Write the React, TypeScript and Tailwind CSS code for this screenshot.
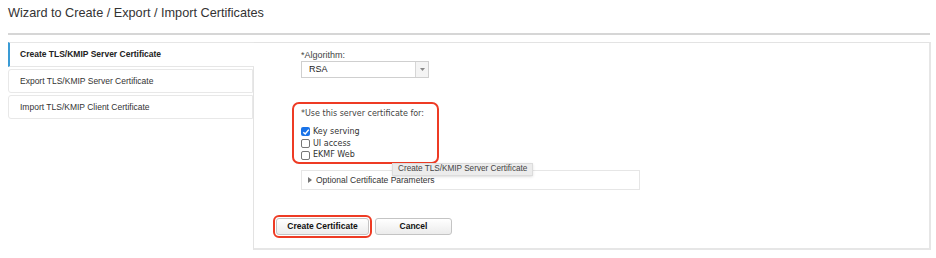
import React from "react";

const tabs = [
  "Create TLS/KMIP Server Certificate",
  "Export TLS/KMIP Server Certificate",
  "Import TLS/KMIP Client Certificate",
];

const uses = [
  { label: "Key serving", checked: true },
  { label: "UI access", checked: false },
  { label: "EKMF Web", checked: false },
];

const Checkbox: React.FC<{ checked: boolean }> = ({ checked }) =>
  checked ? (
    <span className="w-[9px] h-[9px] rounded-[2px] bg-[#1a73e8] flex items-center justify-center">
      <svg width="8" height="8" viewBox="0 0 8 8">
        <path d="M1.3 4.2 L3.2 6 L6.8 1.6" fill="none" stroke="white" strokeWidth="1.5" />
      </svg>
    </span>
  ) : (
    <span className="w-[9px] h-[9px] rounded-[2px] border border-[#777] bg-white" />
  );

export default function App() {
  return (
    <div className="w-[936px] h-[258px] bg-white relative font-['Liberation_Sans',Arial,sans-serif] text-[#222] overflow-hidden">
      {/* Title */}
      <div className="pl-[8px] pt-[5px] h-[33px] text-[12.7px] leading-[16px] text-[#333]">
        Wizard to Create / Export / Import Certificates
      </div>
      <div className="mx-[8px] mr-[6px] h-[2px] bg-[#d6d6d6]" />

      <div className="flex pl-[8px] pt-[7px]">
        {/* Tabs */}
        <div className="w-[245px] flex flex-col gap-[2px]">
          {tabs.map((t, i) =>
            i === 0 ? (
              <div
                key={t}
                className="h-[25px] flex items-center pl-[10px] border-l-2 border-[#3a9bd5] border-t border-b border-t-[#e6e6e6] border-b-[#e6e6e6] bg-white text-[8.5px] font-bold text-[#222] relative z-10 mr-[-1px]"
              >
                {t}
              </div>
            ) : (
              <div
                key={t}
                className="h-[24px] flex items-center pl-[11px] border border-[#e8e8e8] rounded-l-[3px] text-[8.5px] text-[#333]"
              >
                {t}
              </div>
            )
          )}
        </div>

        {/* Panel */}
        <div className="w-[678px] h-[208px] border border-[#e3e3e3] border-r-2 border-b-2 border-r-[#e6e6e6] border-b-[#e6e6e6] pl-[47px] pt-[8px] relative">
          <div className="text-[9px] leading-[9px] text-[#444]">*Algorithm:</div>
          <div className="mt-[1px] w-[128px] h-[17px] border border-[#cfcfcf] flex items-stretch">
            <div className="flex-1 pl-[7px] flex items-center text-[9px] text-[#222]">RSA</div>
            <div className="w-[13px] border-l border-[#d6d6d6] bg-[#f4f4f4] flex items-center justify-center">
              <svg width="5" height="3" viewBox="0 0 5 3">
                <path d="M0 0 H5 L2.5 3 Z" fill="#888" />
              </svg>
            </div>
          </div>

          {/* Usage */}
          <div className="mt-[24px] ml-[-9px] w-[147px] h-[62px] border-2 border-[#ee3b24] rounded-[7px] pl-[7px] pt-[5px] font-['DejaVu_Sans',Verdana,sans-serif]">
            <div className="text-[8px] leading-[10px] text-[#444]">*Use this server certificate for:</div>
            <div className="mt-[7px] flex flex-col">
              {uses.map((u) => (
                <label key={u.label} className="h-[11.7px] flex items-center gap-[3px] text-[8px] text-[#333]">
                  <Checkbox checked={u.checked} />
                  {u.label}
                </label>
              ))}
            </div>
          </div>

          {/* Optional params */}
          <div className="mt-[6px] w-[339px] h-[20px] border border-[#e6e6e6] flex items-center pl-[6px] gap-[4px] text-[8.5px] text-[#333]">
            <svg width="4" height="6" viewBox="0 0 4 6">
              <path d="M0 0 L4 3 L0 6 Z" fill="#777" />
            </svg>
            Optional Certificate Parameters
          </div>

          {/* Buttons */}
          <div className="mt-[25px] ml-[-28px] flex items-center gap-[3px]">
            <div className="flex p-[1px] border-2 border-[#ee3b24] rounded-[6px]">
              <button className="w-[93px] h-[17px] rounded-[3px] border border-[#c4c4c4] bg-gradient-to-b from-white to-[#ececec] text-[8.5px] leading-[15px] font-bold text-[#111]">
                Create Certificate
              </button>
            </div>
            <button className="w-[77px] h-[17px] rounded-[3px] border border-[#c4c4c4] bg-gradient-to-b from-white to-[#ececec] text-[8.5px] leading-[15px] font-bold text-[#111]">
              Cancel
            </button>
          </div>

          {/* Tooltip */}
          <div className="absolute left-[138px] top-[120px] h-[13px] px-[5px] flex items-center bg-[#ececec] border border-[#dcdcdc] text-[8.2px] text-[#444] shadow-sm">
            Create TLS/KMIP Server Certificate
          </div>
        </div>
      </div>
    </div>
  );
}
